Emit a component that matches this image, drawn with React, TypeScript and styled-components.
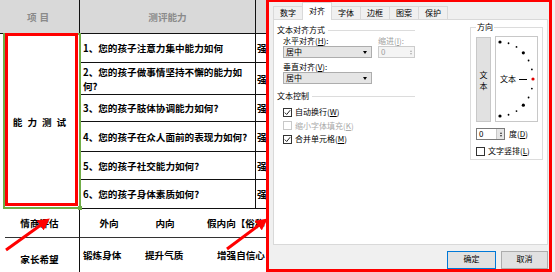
import React from 'react'
import styled, { createGlobalStyle } from 'styled-components'

const GlobalStyle = createGlobalStyle`
  html, body { margin: 0; padding: 0; background: #fff; }
  body { font-family: "Noto Sans CJK SC", "Noto Sans", sans-serif; }
`

const Screen = styled.div`
  position: relative;
  width: 555px;
  height: 272px;
  overflow: hidden;
  display: flex;
  background: #fff;
`

/* ---------- spreadsheet ---------- */

const Sheet = styled.div`
  flex: none;
  width: 266px;
  height: 272px;
  overflow: hidden;
  display: grid;
  grid-template-columns: 80px 176px 10px;
  grid-template-rows: 34px 29px 32px 27px 30px 28px 29px 28px 52px;
  font-family: "Noto Sans CJK SC", sans-serif;
  font-weight: 700;
  font-size: 9.6px;
  color: #000;
`

const HeadCell = styled.div<{ $last?: boolean }>`
  background: #d9d9d9;
  color: #8a8a8a;
  display: flex;
  align-items: center;
  justify-content: center;
  border-right: ${(p) => (p.$last ? 'none' : '1px solid #111')};
  border-bottom: 1px solid #111;
`

const HeadLabel = styled.span<{ $spread?: number }>`
  letter-spacing: ${(p) => p.$spread ?? 0}px;
`

const GroupCell = styled.div<{ $rows: string }>`
  position: relative;
  grid-column: 1;
  grid-row: ${(p) => p.$rows};
  border-right: 1px solid #111;
  display: flex;
  align-items: center;
  justify-content: center;
`

const Spread = styled.span`
  letter-spacing: 5px;
  margin-left: 5px;
`

const Selection = styled.div`
  position: absolute;
  left: 3px;
  top: -1px;
  width: 78px;
  height: 176px;
  box-sizing: border-box;
  border: 2px solid #70ad47;
  &::after {
    content: '';
    position: absolute;
    right: -3px;
    bottom: -3px;
    width: 4px;
    height: 4px;
    background: #70ad47;
  }
`

const Highlight = styled.div`
  position: absolute;
  left: 5px;
  top: -1px;
  width: 73px;
  height: 173px;
  box-sizing: border-box;
  border: 3px solid #ff0000;
`

const QCell = styled.div`
  border-right: 1px solid #111;
  border-bottom: 1px solid #111;
  padding-left: 3px;
  display: flex;
  align-items: center;
  white-space: pre-line;
  line-height: 14px;
`

const RateCell = styled.div`
  border-bottom: 1px solid #111;
  padding-left: 1px;
  display: flex;
  align-items: center;
  white-space: nowrap;
  overflow: hidden;
`

const LabelCell = styled.div<{ $top?: boolean }>`
  grid-column: 1;
  border-right: 1px solid #111;
  border-top: ${(p) => (p.$top ? '1px solid #333' : 'none')};
  margin-left: ${(p) => (p.$top ? '5px' : '0')};
  padding-right: ${(p) => (p.$top ? '5px' : '0')};
  padding-top: ${(p) => (p.$top ? '14px' : '0')};
  display: flex;
  align-items: ${(p) => (p.$top ? 'flex-start' : 'center')};
  justify-content: center;
`

const OptionRow = styled.div<{ $top?: boolean; $cols: string }>`
  grid-column: 2 / 4;
  display: grid;
  grid-template-columns: ${(p) => p.$cols};
  align-items: ${(p) => (p.$top ? 'start' : 'center')};
  padding-top: ${(p) => (p.$top ? '10px' : '0')};
  border-top: ${(p) => (p.$top ? '1px solid #333' : 'none')};
  white-space: nowrap;
  overflow: hidden;
`

const Option = styled.span<{ $align?: string; $pad?: number }>`
  text-align: ${(p) => p.$align ?? 'center'};
  padding-left: ${(p) => p.$pad ?? 0}px;
`

/* ---------- dialog ---------- */

const Dialog = styled.div`
  flex: none;
  width: 286px;
  height: 272px;
  box-sizing: border-box;
  border: 3px solid #ff0000;
  border-top-width: 2px;
  background: #f0f0f0;
  padding-left: 4px;
  display: flex;
  flex-direction: column;
  overflow: hidden;
  font-family: "Noto Sans CJK SC", sans-serif;
  font-size: 8px;
  line-height: 10px;
  color: #000;
`

const Edge = styled.div`
  flex: 1;
  background: #f3f3f3;
`

const TabRow = styled.div`
  display: flex;
  align-items: flex-end;
  height: 18px;
  position: relative;
  z-index: 1;
`

const Tab = styled.div<{ $active?: boolean }>`
  width: 30px;
  height: ${(p) => (p.$active ? 18 : 14)}px;
  box-sizing: border-box;
  border: 1px solid #d9d9d9;
  border-bottom: ${(p) => (p.$active ? 'none' : '1px solid #d9d9d9')};
  margin-left: -1px;
  &:first-child { margin-left: 0; }
  background: ${(p) => (p.$active ? '#fff' : '#f0f0f0')};
  display: flex;
  align-items: center;
  justify-content: center;
  padding-bottom: ${(p) => (p.$active ? 2 : 0)}px;
`

const Panel = styled.div`
  height: 231px;
  margin: -1px 1px 0 0;
  box-sizing: border-box;
  background: #fff;
  border: 1px solid #d9d9d9;
  padding: 5px 4px 0 3px;
  display: flex;
`

const LeftCol = styled.div`
  width: 138px;
  display: flex;
  flex-direction: column;
`

const GroupTitle = styled.div<{ $gap?: number }>`
  display: flex;
  align-items: center;
  gap: 3px;
  margin-top: ${(p) => p.$gap ?? 0}px;
  &::after {
    content: '';
    flex: 1;
    height: 1px;
    background: #dcdcdc;
  }
`

const FieldRow = styled.div`
  display: flex;
  gap: 6px;
  padding-left: 6px;
  margin-top: 1px;
`

const Field = styled.div<{ $gap?: number }>`
  display: flex;
  flex-direction: column;
  margin-top: ${(p) => p.$gap ?? 0}px;
`

const FieldLabel = styled.span<{ $muted?: boolean }>`
  color: ${(p) => (p.$muted ? '#a0a0a0' : '#000')};
  white-space: nowrap;
`

const Combo = styled.div`
  width: 89px;
  height: 12px;
  box-sizing: border-box;
  border: 1px solid #adadad;
  background: #e5e5e5;
  display: flex;
  align-items: center;
  justify-content: space-between;
  padding: 0 4px 0 2px;
`

const Caret = styled.span`
  width: 0;
  height: 0;
  border-left: 2.5px solid transparent;
  border-right: 2.5px solid transparent;
  border-top: 3px solid #000;
`

const Spin = styled.div<{ $disabled?: boolean; $w: number }>`
  width: ${(p) => p.$w}px;
  height: 12px;
  box-sizing: border-box;
  border: 1px solid ${(p) => (p.$disabled ? '#cccccc' : '#7a7a7a')};
  background: ${(p) => (p.$disabled ? '#f4f4f4' : '#fff')};
  color: ${(p) => (p.$disabled ? '#a0a0a0' : '#000')};
  display: flex;
  align-items: center;
  justify-content: space-between;
  padding-left: 2px;
`

const SpinBtns = styled.div<{ $disabled?: boolean }>`
  width: 7px;
  height: 100%;
  background: ${(p) => (p.$disabled ? 'transparent' : '#e5e5e5')};
  border-left: 1px solid ${(p) => (p.$disabled ? 'transparent' : '#c8c8c8')};
  display: flex;
  flex-direction: column;
  align-items: center;
  justify-content: center;
  gap: 1px;
`

const Tri = styled.span<{ $up?: boolean; $muted?: boolean }>`
  width: 0;
  height: 0;
  border-left: 1.5px solid transparent;
  border-right: 1.5px solid transparent;
  ${(p) => (p.$up ? 'border-bottom' : 'border-top')}: 2px solid ${(p) => (p.$muted ? '#b0b0b0' : '#333')};
`

const CheckList = styled.div<{ $indent?: number; $gap?: number }>`
  display: flex;
  flex-direction: column;
  gap: 3.5px;
  padding-left: ${(p) => p.$indent ?? 6}px;
  margin-top: ${(p) => p.$gap ?? 6}px;
`

const CheckRow = styled.label<{ $disabled?: boolean }>`
  display: flex;
  align-items: center;
  gap: 3px;
  color: ${(p) => (p.$disabled ? '#a8a8a8' : '#000')};
  white-space: nowrap;
`

const Box = styled.span<{ $disabled?: boolean }>`
  width: 9px;
  height: 9px;
  box-sizing: border-box;
  border: 1px solid ${(p) => (p.$disabled ? '#c8c8c8' : '#333')};
  background: #fff;
  display: flex;
  align-items: center;
  justify-content: center;
`

const Orient = styled.div`
  position: relative;
  margin: 2px 0 0 55px;
  width: 73px;
  height: 133px;
  box-sizing: border-box;
  border: 1px solid #dcdcdc;
  padding: 9px 4px 0 5px;
  display: flex;
  flex-direction: column;
`

const Legend = styled.span`
  position: absolute;
  top: -6px;
  left: 5px;
  background: #fff;
  padding: 0 1px;
`

const OrientRow = styled.div`
  display: flex;
  gap: 4px;
  align-items: flex-start;
`

const VertButton = styled.div`
  width: 15px;
  height: 85px;
  box-sizing: border-box;
  border: 1px solid #c8c8c8;
  background: #e1e1e1;
  display: flex;
  flex-direction: column;
  align-items: center;
  justify-content: center;
  line-height: 11px;
`

const Dial = styled.div`
  position: relative;
  width: 43px;
  height: 86px;
  margin-top: -1px;
  box-sizing: border-box;
  border: 1px solid #c8c8c8;
  background: #fff;
`

const DialLabel = styled.span`
  position: absolute;
  left: 4px;
  top: 37px;
  display: flex;
  align-items: center;
  gap: 3px;
  &::after {
    content: '';
    width: 8px;
    height: 1px;
    background: #000;
  }
`

const DegreeRow = styled.div`
  display: flex;
  align-items: center;
  gap: 4px;
  margin-top: 6px;
`

const Buttons = styled.div`
  display: flex;
  justify-content: flex-end;
  gap: 5px;
  margin: 6px 1px 0 0;
`

const Button = styled.div<{ $primary?: boolean; $w: number }>`
  width: ${(p) => p.$w}px;
  height: 18px;
  box-sizing: border-box;
  border: 1px solid ${(p) => (p.$primary ? '#0078d7' : '#adadad')};
  background: #e1e1e1;
  text-align: center;
  line-height: 13px;
`

const Overlay = styled.svg`
  position: absolute;
  left: 0;
  top: 0;
  pointer-events: none;
`

/* ---------- parts ---------- */

const questions = [
  '1、您的孩子注意力集中能力如何',
  '2、您的孩子做事情坚持不懈的能力如\n何?',
  '3、您的孩子肢体协调能力如何?',
  '4、您的孩子在众人面前的表现力如何?',
  '5、您的孩子社交能力如何?',
  '6、您的孩子身体素质如何?',
]

const Check: React.FC<{ checked?: boolean; disabled?: boolean; children: React.ReactNode }> = ({
  checked,
  disabled,
  children,
}) => (
  <CheckRow $disabled={disabled}>
    <Box $disabled={disabled}>
      {checked && (
        <svg width="7" height="7" viewBox="0 0 7 7">
          <path d="M0.8 3.6 L2.7 5.5 L6.2 1.2" fill="none" stroke="#222" strokeWidth="1" />
        </svg>
      )}
    </Box>
    <span>{children}</span>
  </CheckRow>
)

const DialDots: React.FC = () => {
  const cx = 4
  const cy = 42
  const dots = []
  for (let a = -90; a <= 90; a += 15) {
    const r = (a * Math.PI) / 180
    const x = cx + 33 * Math.cos(r)
    const y = cy + 37 * Math.sin(r)
    const big = Math.abs(a) === 90 || Math.abs(a) === 45
    dots.push(
      <circle
        key={a}
        cx={x}
        cy={y}
        r={a === 0 || big ? 1.6 : 0.9}
        fill={a === 0 ? '#e00000' : '#000'}
      />
    )
  }
  return (
    <svg width="41" height="84" viewBox="0 0 41 84" style={{ display: 'block' }}>
      {dots}
    </svg>
  )
}

const App: React.FC = () => (
  <>
    <GlobalStyle />
    <Screen>
      <Sheet>
        <HeadCell>
          <HeadLabel $spread={3}>项目</HeadLabel>
        </HeadCell>
        <HeadCell>测评能力</HeadCell>
        <HeadCell $last />

        <GroupCell $rows="2 / 8">
          <Spread>能力测试</Spread>
          <Selection />
          <Highlight />
        </GroupCell>
        {questions.map((q) => (
          <React.Fragment key={q}>
            <QCell>{q}</QCell>
            <RateCell>强</RateCell>
          </React.Fragment>
        ))}

        <LabelCell>情商评估</LabelCell>
        <OptionRow $cols="58px 54px 1fr">
          <Option>外向</Option>
          <Option>内向</Option>
          <Option $align="left" $pad={15}>
            假内向【俗称
          </Option>
        </OptionRow>

        <LabelCell $top>家长希望</LabelCell>
        <OptionRow $top $cols="65px 72px 1fr">
          <Option $align="left" $pad={3}>
            锻炼身体
          </Option>
          <Option $align="left">提升气质</Option>
          <Option $align="left">增强自信心</Option>
        </OptionRow>
      </Sheet>

      <Dialog>
        <TabRow>
          {['数字', '对齐', '字体', '边框', '图案', '保护'].map((t) => (
            <Tab key={t} $active={t === '对齐'}>
              {t}
            </Tab>
          ))}
        </TabRow>
        <Panel>
          <LeftCol>
            <GroupTitle>文本对齐方式</GroupTitle>
            <FieldRow>
              <Field>
                <FieldLabel>
                  水平对齐(<u>H</u>):
                </FieldLabel>
                <Combo>
                  居中
                  <Caret />
                </Combo>
              </Field>
              <Field>
                <FieldLabel $muted>
                  缩进(<u>I</u>):
                </FieldLabel>
                <Spin $disabled $w={37}>
                  0
                  <SpinBtns $disabled>
                    <Tri $up $muted />
                    <Tri $muted />
                  </SpinBtns>
                </Spin>
              </Field>
            </FieldRow>
            <FieldRow>
              <Field $gap={3}>
                <FieldLabel>
                  垂直对齐(<u>V</u>):
                </FieldLabel>
                <Combo>
                  居中
                  <Caret />
                </Combo>
              </Field>
            </FieldRow>
            <GroupTitle $gap={7}>文本控制</GroupTitle>
            <CheckList>
              <Check checked>
                自动换行(<u>W</u>)
              </Check>
              <Check disabled>
                缩小字体填充(<u>K</u>)
              </Check>
              <Check checked>
                合并单元格(<u>M</u>)
              </Check>
            </CheckList>
          </LeftCol>

          <Orient>
            <Legend>方向</Legend>
            <OrientRow>
              <VertButton>
                <span>文</span>
                <span>本</span>
              </VertButton>
              <Dial>
                <DialDots />
                <DialLabel>文本</DialLabel>
              </Dial>
            </OrientRow>
            <DegreeRow>
              <Spin $w={29}>
                0
                <SpinBtns>
                  <Tri $up />
                  <Tri />
                </SpinBtns>
              </Spin>
              <span>
                度(<u>D</u>)
              </span>
            </DegreeRow>
            <CheckList $indent={0}>
              <Check>
                文字竖排(<u>L</u>)
              </Check>
            </CheckList>
          </Orient>
        </Panel>
        <Buttons>
          <Button $primary $w={49}>
            确定
          </Button>
          <Button $w={47}>取消</Button>
        </Buttons>
      </Dialog>
      <Edge />

      <Overlay width="555" height="272" viewBox="0 0 555 272">
        <defs>
          <marker id="head" markerWidth="4" markerHeight="4" refX="2" refY="2" orient="auto">
            <path d="M0 0 L4 2 L0 4 Z" fill="#ff0000" />
          </marker>
        </defs>
        <line x1="6" y1="250" x2="45" y2="222" stroke="#ff0000" strokeWidth="3" markerEnd="url(#head)" />
        <line x1="227" y1="249" x2="263" y2="222" stroke="#ff0000" strokeWidth="3" markerEnd="url(#head)" />
      </Overlay>
    </Screen>
  </>
)

export default App
